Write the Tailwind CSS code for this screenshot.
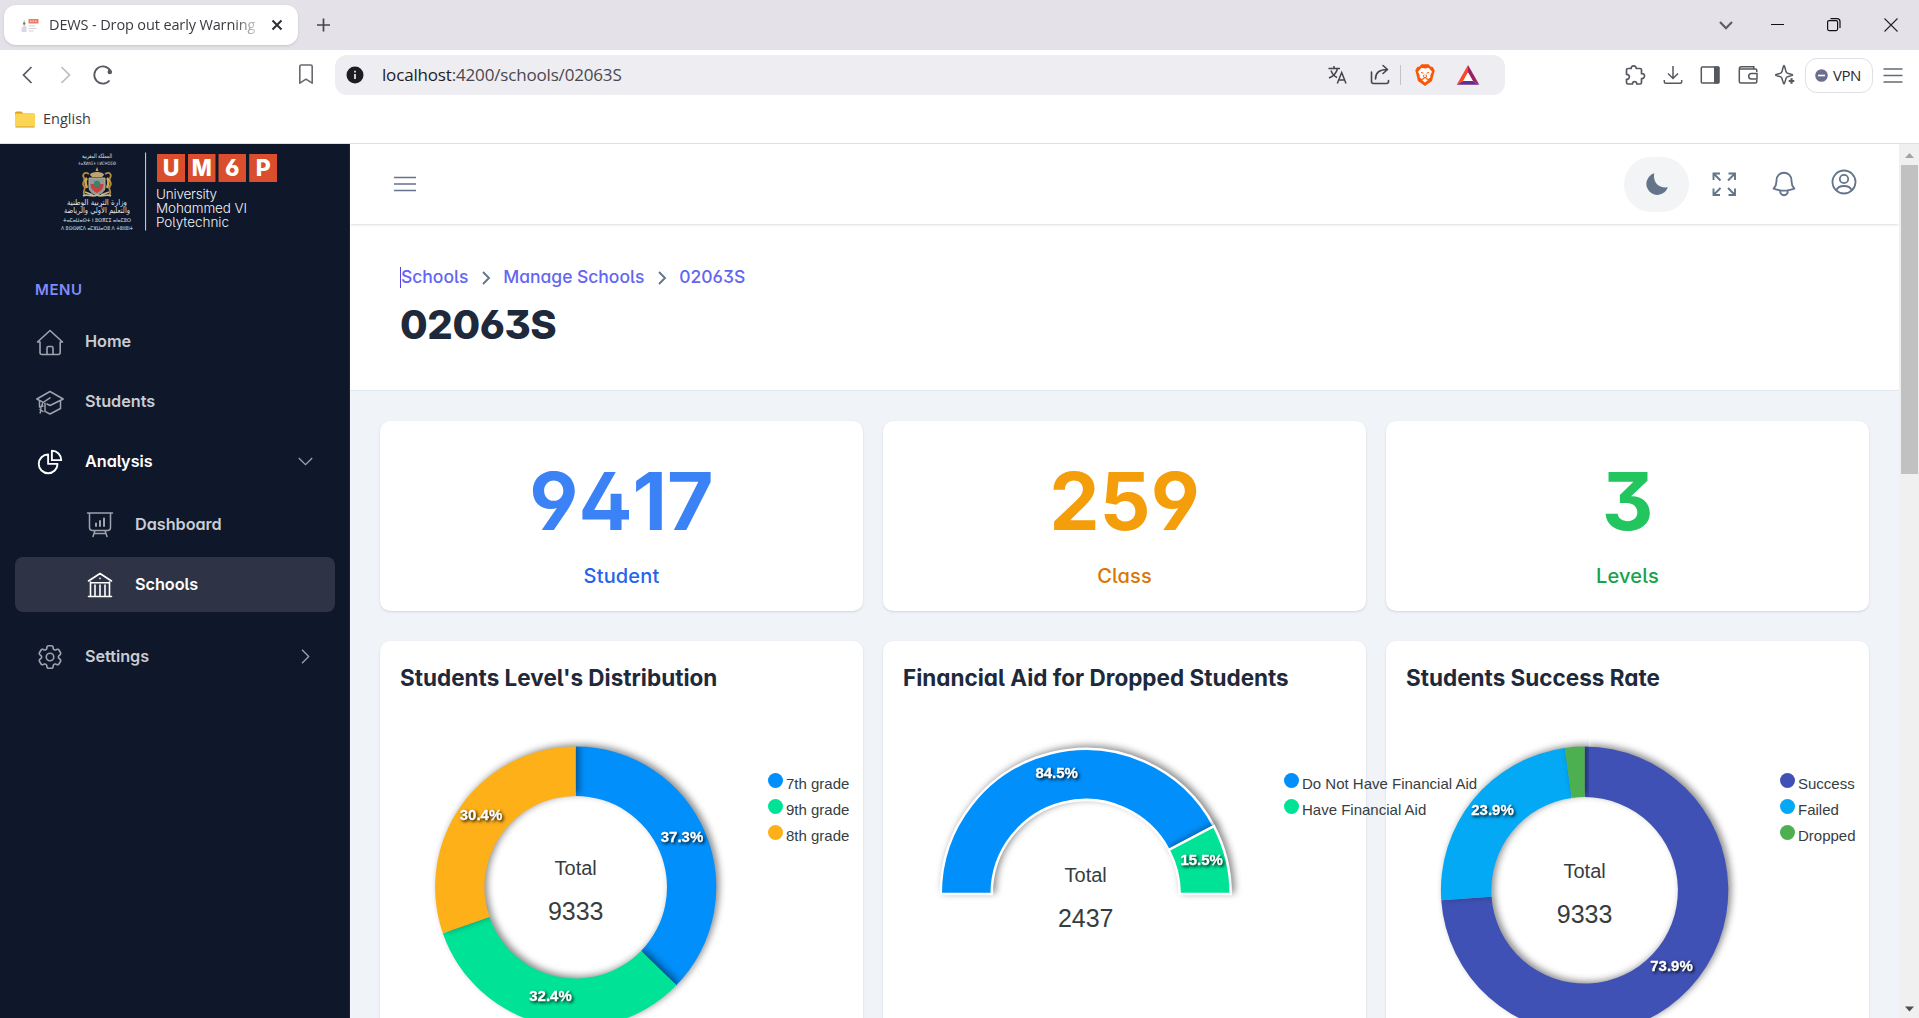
<!DOCTYPE html>
<html lang="en">
<head>
<meta charset="utf-8">
<title>DEWS - Drop out early Warning System</title>
<script src="https://cdn.jsdelivr.net/npm/@tailwindcss/browser@4"></script>
</head>
<body class="w-[1919px] h-[1018px] overflow-hidden flex flex-col bg-white font-['Open_Sans',sans-serif]">

<!-- Tab strip -->
<div class="h-[50px] shrink-0 bg-[#e4e2e8] flex items-center pl-1">
  <div class="w-[294px] h-10 bg-white rounded-xl shadow-sm flex items-center pl-[17px]">
    <svg class="w-[18px] h-4 shrink-0" viewBox="0 0 18 16"><path d="M2.500 3h1.500v5l1.500 2v5h-5v-4l2-2z" fill="#d9d8e8"/><circle cx="3.200" cy="6.500" r="1.200" fill="#8b6d3a"/><rect x="7.500" y="2" width="10" height="4.500" fill="#ee7b63"/><path d="M9 4.200h7" stroke="#fbd3ca" stroke-width="1.200" stroke-dasharray="1.500 1"/><path d="M7.500 9h6.500M7.500 11.500h8M7.500 14h5" stroke="#d4d4d8" stroke-width="1.200"/></svg>
    <div class="ml-2.5 w-[209px] whitespace-nowrap text-[14.5px] text-[#3b3a40] tracking-[-0.13px] [mask-image:linear-gradient(to_right,black_185px,transparent_214px)]">DEWS - Drop out early Warning</div>
    <svg class="w-5 h-5 ml-[9px] shrink-0" viewBox="0 0 20 20" fill="none" stroke="#2f2e35" stroke-width="2"><path d="M5.500 5.500l9 9M14.500 5.500l-9 9"/></svg>
  </div>
  <svg class="w-5 h-5 ml-[15px]" viewBox="0 0 20 20" fill="none" stroke="#46454c" stroke-width="1.700"><path d="M10.500 3.500v13M4 10h13"/></svg>
  <div class="ml-auto flex items-center">
    <svg class="w-5 h-5" viewBox="0 0 20 20" fill="none" stroke="#5b5e63" stroke-width="2.200"><path d="M4 7l6 6.200L16 7"/></svg>
    <svg class="w-5 h-5 ml-[31px]" viewBox="0 0 20 20"><path d="M4 9.500h13" stroke="#111"/></svg>
    <svg class="w-5 h-5 ml-9" viewBox="0 0 20 20" fill="none" stroke="#111" stroke-width="1.200"><rect x="4.600" y="5.600" width="10" height="10" rx="1.500"/><path d="M7.500 3.600h6.500a3 3 0 013 3v6.500"/></svg>
    <svg class="w-5 h-5 ml-[38px] mr-[18px]" viewBox="0 0 20 20" fill="none" stroke="#222" stroke-width="1.100"><path d="M3.500 3.500l13 13M16.500 3.500l-13 13"/></svg>
  </div>
</div>

<!-- Address row -->
<div class="h-[50px] shrink-0 flex items-center pl-[17px]">
  <svg class="w-5 h-5" viewBox="0 0 20 20" fill="none" stroke="#55585f" stroke-width="1.700"><path d="M14.500 2L6.500 10l8 8"/></svg>
  <svg class="w-5 h-5 ml-[18px]" viewBox="0 0 20 20" fill="none" stroke="#bcbdc1" stroke-width="1.700"><path d="M6.500 2l8 8-8 8"/></svg>
  <svg class="w-6 h-6 ml-[16px]" viewBox="0 0 24 24" fill="none" stroke="#55585f" stroke-width="1.800"><path d="M18.500 17.500A8.600 8.600 0 1 1 19.500 8"/><circle cx="18.800" cy="9" r="2.300" fill="#55585f" stroke="none"/></svg>
  <svg class="w-6 h-6 ml-[179px]" viewBox="0 0 24 24" fill="none" stroke="#66696f" stroke-width="1.600"><path d="M5.800 3.500a1.500 1.500 0 011.500-1.500h9.400a1.500 1.500 0 011.500 1.500V20.200L12 16.200l-6.200 4z" stroke-linejoin="round"/></svg>
  <div class="ml-[17px] w-[1170px] h-10 rounded-xl bg-[#eeedf2] flex items-center pl-[11px]">
    <svg class="w-[18px] h-[18px]" viewBox="0 0 18 18"><circle cx="9" cy="9" r="8.500" fill="#1d1c22"/><path d="M9 8v5M9 4.700v1.800" stroke="#eeedf2" stroke-width="1.700"/></svg>
    <div class="ml-[18px] text-[17px] text-[#49484f] tracking-[-0.17px] whitespace-nowrap"><span class="text-[#1d1c22]">localhost</span>:4200/schools/02063S</div>
    <div class="ml-auto flex items-center">
      <svg class="w-6 h-6" viewBox="0 0 24 24" fill="none" stroke="#46454c" stroke-width="1.500"><path d="M3.500 5.500h11.500M9 3v2.500M12.500 5.500c-1 4-4.500 8-8.500 9.500M6 7.500c1 3 3 5.500 6 7M12.300 20.500L16.700 9.500 21 20.500M13.800 17h5.800"/></svg>
      <svg class="w-6 h-6 ml-[19px]" viewBox="0 0 24 24" fill="none" stroke="#46454c" stroke-width="1.600" stroke-linecap="round" stroke-linejoin="round"><path d="M3.500 9v9.500a2 2 0 002 2h13a2 2 0 002-2V17.500M7.500 16c0-5.500 3.500-9.500 11.500-9.500M15 2.500l4.500 4-4.500 4"/></svg>
      <div class="w-px h-5 ml-2 bg-[#c4c3c9]"></div>
      <svg class="w-6 h-6 ml-3" viewBox="0 0 24 24"><path d="M6.500 3.500L8.500 1.200h7l2 2.300 2.300.6L21.700 7.500 21 10l-2 8-7 5-7-5-2-8-.700-2.500 1.900-3.400z" fill="#fb5607"/><path d="M12 5.500l3.500-.700L19 8.700l-1.800 3.800.3 1.700-2 1.800-1.700-1-1.800.7-1.800-.7-1.700 1-2-1.800.300-1.700L5 8.700l3.500-3.900z" fill="#fff"/><path d="M9 17l3-1.200 3 1.200-3 2.500z" fill="#fff"/><path d="M8 9.500l2.500.7M16 9.500l-2.500.7M11 11.500l-.5 2.500 1.500.8 1.500-.8-.5-2.500" fill="none" stroke="#fb5607" stroke-width="1"/></svg>
      <svg class="w-6 h-6 ml-[19px] mr-[25px]" viewBox="0 0 24 24"><path d="M12 2L.7 21.700l6.500-3.800L12 9.500z" fill="#ff4724"/><path d="M12 2l11.300 19.700-6.500-3.800L12 9.500z" fill="#9e1f63"/><path d="M.7 21.700h22.600l-6.500-3.800H7.200z" fill="#662d91"/><path d="M12 9.500l4.800 8.400H7.200z" fill="#fff"/></svg>
    </div>
  </div>
  <div class="ml-auto flex items-center">
    <svg class="w-6 h-6" viewBox="0 0 24 24" fill="none" stroke="#55585f" stroke-width="1.700" stroke-linejoin="round"><path d="M5 5.500h3.200c-.7-3.500 5.600-3.500 5 0h3.800a1.500 1.500 0 011.500 1.500v3.700c4-.8 4 5.400 0 4.800v4a1.500 1.500 0 01-1.500 1.500h-3.300c.4-3.300-4.600-3.300-4.200 0H5A1.500 1.500 0 013.500 19.500v-3.200c3.800.4 3.800-5.300 0-4.900V7A1.500 1.500 0 015 5.500z"/></svg>
    <svg class="w-6 h-6 ml-[13.500px]" viewBox="0 0 24 24" fill="none" stroke="#55585f" stroke-width="1.500"><path d="M12 3v12M7 10.500l5 5 5-5M3.300 17v1.800a1.500 1.500 0 001.500 1.500h14.400a1.500 1.500 0 001.500-1.500V17"/></svg>
    <svg class="w-6 h-6 ml-[13.500px]" viewBox="0 0 24 24"><rect x="3.300" y="4" width="17.500" height="16" rx="1" fill="none" stroke="#55585f" stroke-width="1.500"/><path d="M16 3.500h4.500a1 1 0 011 1v15a1 1 0 01-1 1H16z" fill="#55585f"/></svg>
    <svg class="w-6 h-6 ml-[13.500px]" viewBox="0 0 24 24" fill="none" stroke="#55585f" stroke-width="1.500"><path d="M20.800 9V7.500a1.500 1.500 0 00-1.500-1.500H3.300M3.300 6v12.500a1.500 1.500 0 001.500 1.500h14.500a1.500 1.500 0 001.500-1.500V17M3.300 6a2 2 0 011.500-2.200h13v2.200M21 10.500h-5.500a2.800 2.800 0 000 5.600H21z"/></svg>
    <svg class="w-6 h-6 ml-[13.500px]" viewBox="0 0 24 24" fill="none" stroke="#55585f" stroke-width="1.500" stroke-linejoin="round"><path d="M11 2.500c1 0 1.300 6 2.700 7.300s6 1.200 6 2.200-4.600 1-6 2.300-1.700 6.700-2.700 6.700-1.300-5.300-2.700-6.700S2.500 13 2.500 12s4.400-.9 5.800-2.200S10 2.500 11 2.500z"/><path d="M18.500 15.200v5.600M15.700 18h5.600" stroke-width="2.200"/></svg>
    <div class="ml-[8px] w-[68px] h-[35px] rounded-xl border border-[#dfdee4] flex items-center pl-[9px] text-[#2b2a30]">
      <svg class="w-[13px] h-[13px]" viewBox="0 0 13 13"><circle cx="6.500" cy="6.500" r="6.300" fill="#6b6f8d"/><path d="M3 6.500h7" stroke="#fff" stroke-width="1.600"/></svg>
      <span class="ml-[5px] text-[15px] tracking-[-0.5px]">VPN</span>
    </div>
    <svg class="w-5 h-5 ml-2.5 mr-[16px]" viewBox="0 0 20 20" stroke="#66696f" stroke-width="1.500"><path d="M.5 4h19M.5 10.500h19M.5 17h19"/></svg>
  </div>
</div>

<!-- Bookmarks -->
<div class="h-11 shrink-0 flex items-center pl-[15px] pb-[5px] border-b border-[#e0e0e4] text-[14.500px] text-[#3b3a40]">
  <svg class="w-5 h-[17px]" viewBox="0 0 20 17"><path d="M0 2a1.500 1.500 0 011.500-1.500h5L8.500 2.500h10A1.500 1.500 0 0120 4v3H0z" fill="#e0a315"/><rect y="2.500" width="20" height="13.500" rx="1.500" fill="#fcd653"/><path d="M.5 16h19" stroke="#cf9c2c"/></svg>
  <span class="ml-2">English</span>
</div>

<!-- Page -->
<div class="flex-1 min-h-0 flex font-['Inter',sans-serif] [font-feature-settings:'cv02','cv03','cv04','cv05','cv09','cv11']">

  <aside class="w-[350px] shrink-0 bg-[#0f172a] border-r border-[#1d2536]">
    <svg class="block w-[349px] h-[106px]" viewBox="0 144 349 106">
      <g fill="#dfe3ea" font-family="'DejaVu Sans', sans-serif" text-anchor="middle">
        <text x="97" y="158" font-size="6" textLength="30" lengthAdjust="spacingAndGlyphs" direction="rtl">المملكة المغربية</text>
        <text x="97" y="165" font-size="4.500" textLength="38" lengthAdjust="spacingAndGlyphs">ⵜⴰⴳⵍⴷⵉⵜ ⵏ ⵍⵎⵖⵔⵉⴱ</text>
        <text x="97" y="205" font-size="8" textLength="60" lengthAdjust="spacingAndGlyphs">وزارة التربية الوطنية</text>
        <text x="97" y="213" font-size="8" textLength="66" lengthAdjust="spacingAndGlyphs">والتعليم الأولي والرياضة</text>
        <text x="97" y="222" font-size="5" textLength="68" lengthAdjust="spacingAndGlyphs">ⵜⴰⵎⴰⵡⴰⵙⵜ ⵏ ⵓⵙⴳⵎⵉ ⴰⵏⴰⵎⵓⵔ</text>
        <text x="97" y="230" font-size="5" textLength="72" lengthAdjust="spacingAndGlyphs">ⴷ ⵓⵙⵙⵍⵎⴷ ⴰⵎⵣⵡⴰⵔⵓ ⴷ ⵜⵓⵏⵏⵓⵏⵜ</text>
      </g>
      <g fill="none" stroke="#b08a3e" stroke-width="1.800">
        <path d="M89 174c-5-3-7 1-5 4s-3 5 0 8-3 6 1 9M105 174c5-3 7 1 5 4s3 5 0 8 3 6-1 9"/>
        <path d="M87 178c-3 3-1 7 0 10M107 178c3 3 1 7 0 10" stroke="#d1a94f" stroke-width="2.500"/>
      </g>
      <path d="M90 175c0-4 14-4 14 0l-2 2H92zM97 167l1.500 4h-3z" fill="#bda474"/>
      <path d="M89 178h16v9c0 5-5 7-8 8-3-1-8-3-8-8z" fill="#8a9aa0" stroke="#c5ad80"/>
      <path d="M90.500 184h13c0 5-3 7-6.500 9-3.500-2-6.500-4-6.500-9z" fill="#c8423c"/>
      <circle cx="97" cy="184" r="3.200" fill="#3f8268"/>
      <path d="M83 196c4-3 9 2 14-1 5 3 10-2 14 1M85 192l8 3M109 192l-8 3" fill="none" stroke="#c9b78f" stroke-width="1.600"/>
      <path d="M145.600 152.500v78" stroke="#d5d9e0"/>
      <g fill="#d94f2d"><rect x="157" y="154" width="28" height="28"/><rect x="188" y="154" width="27.500" height="28"/><rect x="218.500" y="154" width="27.500" height="28"/><rect x="249.200" y="154" width="27.800" height="28"/></g>
      <g fill="#fff" font-family="Inter, sans-serif" font-weight="800" font-size="23" text-anchor="middle"><text x="171" y="176.200">U</text><text x="201.800" y="176.200" textLength="20" lengthAdjust="spacingAndGlyphs">M</text><text x="232.300" y="176.200">6</text><text x="263.300" y="176.200">P</text></g>
      <g fill="#f1f3f6" font-family="Inter, sans-serif" font-weight="300" font-size="13.500"><text x="156" y="199" textLength="61">University</text><text x="156" y="213" textLength="91">Mohammed VI</text><text x="156" y="227" textLength="73">Polytechnic</text></g>
    </svg>
    <div class="mt-[30px] h-5 flex items-center pl-[35px] text-[15px] font-semibold tracking-[0.6px] text-[#818cf8]">MENU</div>
    <nav class="mt-[14px] pl-[15px] pr-[14px] flex flex-col gap-[5px] text-[16.25px] tracking-[-0.05px] font-semibold text-[#c9ccd3]">
      <a class="h-[55px] flex items-center px-5 gap-5">
        <svg class="w-[30px] h-[30px] text-[#9fa3ad]" viewBox="0 0 30 30" fill="none" stroke="currentColor" stroke-width="1.600" stroke-linejoin="round" stroke-linecap="round"><path d="M2.500 15L15 3.500 27.500 15h-2.300v10.500a2 2 0 01-2 2H7a2 2 0 01-2-2V15zM12 27.500v-6.500a1.500 1.500 0 011.500-1.500h3a1.500 1.500 0 011.500 1.500v6.500"/></svg>Home</a>
      <a class="h-[55px] flex items-center px-5 gap-5">
        <svg class="w-[30px] h-[30px] text-[#9fa3ad]" viewBox="0 0 30 30" fill="none" stroke="currentColor" stroke-width="1.500" stroke-linejoin="round" stroke-linecap="round"><path d="M1.800 12L15 4.500 28.200 12 15 18.500l-3-1.500M1.800 12l5.500 2.800M15 10.800l-7 4.700c-2 4-2.500 7-2.800 10.500M4.500 13.500v6.500l3.500-1M5 22.500l3 2M25.500 13.500v8L15 27l-5-2.600v-8.200"/></svg>Students</a>
      <a class="h-[55px] flex items-center px-5 gap-5 text-white">
        <svg class="w-[30px] h-[30px]" viewBox="0 0 24 24" fill="none" stroke="currentColor" stroke-width="1.500" stroke-linejoin="round" stroke-linecap="round"><path d="M10.500 6a7.500 7.500 0 107.500 7.500h-7.500V6z"/><path d="M13.500 10.500H21A7.500 7.500 0 0013.500 3v7.500z"/></svg>Analysis
        <svg class="w-[15px] h-[15px] ml-auto mr-[2px] text-[#9fa3ad]" viewBox="0 0 15 15" fill="none" stroke="currentColor" stroke-width="1.300"><path d="M.8 4l6.700 6.700L14.200 4"/></svg></a>
      <a class="mt-[3px] h-[55px] flex items-center pl-[70px] gap-5">
        <svg class="w-[30px] h-[30px] text-[#9fa3ad]" viewBox="0 0 30 30" fill="none" stroke="currentColor" stroke-width="1.500" stroke-linecap="round"><path d="M2.500 3h25M4.500 3v14.500a3 3 0 003 3h15a3 3 0 003-3V3M10 20.500L8 26.500M20 20.500l2 6M9.200 23.500h11.600"/><path d="M11 16v-2.500M15 16v-5M19 16V8.500" stroke-width="2"/></svg>Dashboard</a>
      <a class="h-[55px] flex items-center pl-[70px] gap-5 text-white bg-[#2e3445] rounded-lg">
        <svg class="w-[30px] h-[30px]" viewBox="0 0 30 30" fill="none" stroke="currentColor" stroke-width="1.600" stroke-linecap="round" stroke-linejoin="round"><path d="M3.500 26.500h23M3.500 11L15 3.500 26.500 11M15 8.200v.4M5.500 26V12M24.500 26V12M10 26V15M15 26V15M20 26V15M5.500 12.800h19"/></svg>Schools</a>
      <a class="mt-3 h-[55px] flex items-center px-5 gap-5">
        <svg class="w-[30px] h-[30px] text-[#9fa3ad]" viewBox="0 0 24 24" fill="none" stroke="currentColor" stroke-width="1.300" stroke-linejoin="round" stroke-linecap="round"><path d="M9.594 3.940c.09-.542.560-.940 1.110-.940h2.593c.550 0 1.020.398 1.110.940l.213 1.281c.063.374.313.686.645.870.074.040.147.083.220.127.324.196.720.257 1.075.124l1.217-.456a1.125 1.125 0 011.370.490l1.296 2.247a1.125 1.125 0 01-.260 1.431l-1.003.827c-.293.240-.438.613-.431.992a6.759 6.759 0 010 .255c-.007.378.138.750.430.990l1.005.828c.424.350.534.954.260 1.430l-1.298 2.247a1.125 1.125 0 01-1.369.491l-1.217-.456c-.355-.133-.750-.072-1.076.124a6.570 6.570 0 01-.220.128c-.331.183-.581.495-.644.869l-.213 1.280c-.090.543-.560.941-1.110.941h-2.594c-.550 0-1.020-.398-1.110-.940l-.213-1.281c-.062-.374-.312-.686-.644-.870a6.520 6.520 0 01-.220-.127c-.325-.196-.720-.257-1.076-.124l-1.217.456a1.125 1.125 0 01-1.369-.490l-1.297-2.247a1.125 1.125 0 01.260-1.431l1.004-.827c.292-.240.437-.613.430-.992a6.932 6.932 0 010-.255c.007-.378-.138-.750-.430-.990l-1.004-.828a1.125 1.125 0 01-.260-1.430l1.297-2.247a1.125 1.125 0 011.370-.491l1.216.456c.356.133.751.072 1.076-.124.072-.044.146-.087.220-.128.332-.183.582-.495.644-.869l.214-1.281z"/><path d="M15 12a3 3 0 11-6 0 3 3 0 016 0z"/></svg>Settings
        <svg class="w-[15px] h-[15px] ml-auto mr-[2px] text-[#9fa3ad]" viewBox="0 0 15 15" fill="none" stroke="currentColor" stroke-width="1.300"><path d="M4 .8l6.700 6.700L4 14.200"/></svg></a>
    </nav>
  </aside>

  <main class="flex-1 min-w-0 flex flex-col bg-[#f0f3f8] overflow-hidden">
    <header class="relative z-10 h-20 shrink-0 bg-white shadow flex items-center pl-11 pr-[40px] text-[#64748b]">
      <svg class="w-[22px] h-[18px]" viewBox="0 0 22 18" stroke="currentColor" stroke-width="1.700"><path d="M0 2.500h22M0 9h22M0 15.500h22"/></svg>
      <div class="ml-auto flex items-center">
        <div class="w-[65px] h-[55px] rounded-full bg-[#f3f4f6] flex items-center justify-center">
          <svg class="w-[22px] h-[22px]" viewBox="0 0 22 22" fill="currentColor"><path d="M8.300.3C6.700 8 11.500 15.500 21.800 14.300A11 11 0 118.300.3z"/></svg>
        </div>
        <svg class="w-[30px] h-[30px] ml-5" viewBox="0 0 30 30" fill="none" stroke="currentColor" stroke-width="1.900"><path d="M4.500 11V4.500H11M4.500 4.500l7 7M26 11V4.500h-6.500M26 4.500l-7 7M4.500 19.500V26H11M4.500 26l7-7M26 19.500V26h-6.500M26 26l-7-7"/></svg>
        <svg class="w-[30px] h-[30px] ml-[30px]" viewBox="0 0 24 24" fill="none" stroke="currentColor" stroke-width="1.500" stroke-linecap="round" stroke-linejoin="round"><path d="M14.857 17.082a23.848 23.848 0 005.454-1.310A8.967 8.967 0 0118 9.750v-.700V9A6 6 0 006 9v.750a8.967 8.967 0 01-2.312 6.022c1.733.640 3.560 1.085 5.455 1.310m5.714 0a24.255 24.255 0 01-5.714 0m5.714 0a3 3 0 11-5.714 0"/></svg>
        <svg class="w-[30px] h-[30px] ml-[30px] mb-1" viewBox="0 0 30 30" fill="none" stroke="currentColor" stroke-width="1.800"><circle cx="15" cy="15" r="11.500"/><circle cx="15" cy="12" r="4.200"/><path d="M7.200 23.500c1-3 4-4.500 7.800-4.500s6.800 1.500 7.800 4.500"/></svg>
      </div>
    </header>

    <div class="h-[167px] shrink-0 bg-white border-b border-[#e2e8f0] pl-[50px] pt-[41px]">
      <div class="flex items-center h-[25px] text-[17.500px] font-[450] tracking-[-0.03px] text-[#6366f1]">
        <span class="border-l border-[#4f46e5] h-[21px] flex items-center">Schools</span>
        <svg class="w-3.5 h-3.5 mx-[10.500px] text-[#64748b]" viewBox="0 0 14 14" fill="none" stroke="currentColor" stroke-width="1.900"><path d="M4 1l6 6-6 6"/></svg>
        <span>Manage Schools</span>
        <svg class="w-3.5 h-3.5 mx-[10.500px] text-[#64748b]" viewBox="0 0 14 14" fill="none" stroke="currentColor" stroke-width="1.900"><path d="M4 1l6 6-6 6"/></svg>
        <span>02063S</span>
      </div>
      <h1 class="mt-[10px] leading-[50px] text-[40px] font-extrabold tracking-[-0.4px] text-[#1e293b]">02063S</h1>
    </div>

    <div class="pt-[30px] pl-[30px] grid grid-cols-[483px_483px_483px] gap-x-5 gap-y-[30px]">
      <div class="h-[190px] bg-white rounded-[10px] shadow flex flex-col items-center">
        <div class="mt-10 leading-[80px] text-[80px] font-bold [font-kerning:none] text-[#3b82f6]">9417</div>
        <div class="mt-5 leading-[30px] text-[20px] font-[450] tracking-[0.15px] text-[#2563eb]">Student</div>
      </div>
      <div class="h-[190px] bg-white rounded-[10px] shadow flex flex-col items-center">
        <div class="mt-10 leading-[80px] text-[80px] font-bold [font-kerning:none] text-[#f59e0b]">259</div>
        <div class="mt-5 leading-[30px] text-[20px] font-[450] tracking-[0.15px] text-[#d97706]">Class</div>
      </div>
      <div class="h-[190px] bg-white rounded-[10px] shadow flex flex-col items-center">
        <div class="mt-10 leading-[80px] text-[80px] font-bold [font-kerning:none] text-[#22c55e]">3</div>
        <div class="mt-5 leading-[30px] text-[20px] font-[450] tracking-[0.15px] text-[#16a34a]">Levels</div>
      </div>

      <section class="h-[480px] bg-white rounded-[10px] shadow">
        <h2 class="pt-[22px] pl-5 leading-[30px] text-[22.500px] font-bold text-[#1e293b]">Students Level's Distribution</h2>
        <div class="flex">
          <svg class="w-[388px] h-[420px] shrink-0 overflow-visible" viewBox="0 0 388 420" data-chart="levels"></svg>
          <ul class="mt-[78px] font-['Liberation_Sans',sans-serif] [font-feature-settings:normal] text-[15px] text-[#373d3f] whitespace-nowrap">
            <li class="h-[26px] flex items-center gap-[3px]"><i class="w-[15px] h-[15px] rounded-full bg-[#008ffb] mb-[7px]"></i>7th grade</li>
            <li class="h-[26px] flex items-center gap-[3px]"><i class="w-[15px] h-[15px] rounded-full bg-[#00e396] mb-[7px]"></i>9th grade</li>
            <li class="h-[26px] flex items-center gap-[3px]"><i class="w-[15px] h-[15px] rounded-full bg-[#feb019] mb-[7px]"></i>8th grade</li>
          </ul>
        </div>
      </section>

      <section class="h-[480px] bg-white rounded-[10px] shadow">
        <h2 class="pt-[22px] pl-5 leading-[30px] text-[22.500px] font-bold text-[#1e293b]">Financial Aid for Dropped Students</h2>
        <div class="flex">
          <svg class="w-[401px] h-[420px] shrink-0 overflow-visible" viewBox="0 0 401 420" data-chart="aid"></svg>
          <ul class="relative z-10 mt-[78px] font-['Liberation_Sans',sans-serif] [font-feature-settings:normal] text-[15px] text-[#373d3f] whitespace-nowrap">
            <li class="h-[26px] flex items-center gap-[3px]"><i class="w-[15px] h-[15px] rounded-full bg-[#008ffb] mb-[7px]"></i>Do Not Have Financial Aid</li>
            <li class="h-[26px] flex items-center gap-[3px]"><i class="w-[15px] h-[15px] rounded-full bg-[#00e396] mb-[7px]"></i>Have Financial Aid</li>
          </ul>
        </div>
      </section>

      <section class="h-[480px] bg-white rounded-[10px] shadow">
        <h2 class="pt-[22px] pl-5 leading-[30px] text-[22.500px] font-bold text-[#1e293b]">Students Success Rate</h2>
        <div class="flex">
          <svg class="w-[394px] h-[420px] shrink-0 overflow-visible" viewBox="0 0 394 420" data-chart="success"></svg>
          <ul class="mt-[78px] font-['Liberation_Sans',sans-serif] [font-feature-settings:normal] text-[15px] text-[#373d3f] whitespace-nowrap">
            <li class="h-[26px] flex items-center gap-[3px]"><i class="w-[15px] h-[15px] rounded-full bg-[#3f51b5] mb-[7px]"></i>Success</li>
            <li class="h-[26px] flex items-center gap-[3px]"><i class="w-[15px] h-[15px] rounded-full bg-[#03a9f4] mb-[7px]"></i>Failed</li>
            <li class="h-[26px] flex items-center gap-[3px]"><i class="w-[15px] h-[15px] rounded-full bg-[#4caf50] mb-[7px]"></i>Dropped</li>
          </ul>
        </div>
      </section>
    </div>
  </main>

  <div class="w-5 shrink-0 bg-[#f0f0f0] flex flex-col items-center">
    <svg class="w-5 h-[21px]" viewBox="0 0 20 21"><path d="M6 14l4.500-5 4.500 5z" fill="#a3a3a3"/></svg>
    <div class="w-[17px] h-[309px] bg-[#c1c1c1]"></div>
    <svg class="w-5 h-[21px] mt-auto" viewBox="0 0 20 21"><path d="M6 9.500l4.500 5 4.500-5z" fill="#505050"/></svg>
  </div>
</div>

<svg width="0" height="0" class="absolute">
  <defs>
    <filter id="sliceShadow" x="-20%" y="-20%" width="140%" height="140%" color-interpolation-filters="sRGB"><feDropShadow dx="3" dy="-2" stdDeviation="3.500" flood-color="#000" flood-opacity="0.450"/></filter>
    <filter id="labelShadow" x="-50%" y="-80%" width="200%" height="260%" color-interpolation-filters="sRGB"><feDropShadow dx="1.500" dy="1.500" stdDeviation="1.800" flood-color="#000" flood-opacity="0.900"/></filter>
  </defs>
</svg>

<script>
// Angles are in degrees, clockwise from twelve o'clock; label = [text, x, y].
const charts = {
  levels: { cx: 195.700, cy: 194.200, R: 140.600, r: 91.300, start: 0, span: 360, stroke: 0,
    slices: [[37.3, '#008ffb'], [32.4, '#00e396'], [30.3, '#feb019']],
    labels: [['37.3%', 302, 149], ['32.4%', 170.500, 308], ['30.4%', 101, 126.700]], total: '9333', ty: 182 },
  aid: { cx: 202.700, cy: 201, R: 145, r: 94, start: -90, span: 180, stroke: 2.5,
    slices: [[84.5, '#008ffb'], [15.5, '#00e396']],
    labels: [['84.5%', 173.700, 85], ['15.5%', 318.700, 172]], total: '2437', ty: 188.700 },
  success: { cx: 198.600, cy: 197.300, R: 143.700, r: 93.300, start: 0, span: 360, stroke: 0,
    slices: [[73.9, '#3f51b5'], [23.9, '#03a9f4'], [2.2, '#4caf50']],
    labels: [['73.9%', 285.500, 278], ['23.9%', 106.500, 122]], total: '9333', ty: 185 }
};
for (const [name, c] of Object.entries(charts)) {
  const pt = (rad, deg) => {
    const t = (deg - 90) * Math.PI / 180;
    return (c.cx + rad * Math.cos(t)).toFixed(2) + ' ' + (c.cy + rad * Math.sin(t)).toFixed(2);
  };
  let a = c.start, out = '';
  for (const [pct, color] of c.slices) {
    const b = a + c.span * pct / 100, big = b - a > 180 ? 1 : 0;
    out += `<path filter="url(#sliceShadow)" fill="${color}" stroke="#fff" stroke-width="${c.stroke}" d="M${pt(c.R, a)}A${c.R} ${c.R} 0 ${big} 1 ${pt(c.R, b)}L${pt(c.r, b)}A${c.r} ${c.r} 0 ${big} 0 ${pt(c.r, a)}Z"/>`;
    a = b;
  }
  for (const [t, x, y] of c.labels)
    out += `<text filter="url(#labelShadow)" x="${x}" y="${y}" font-size="15" font-weight="700" fill="#fff" stroke="#fff" stroke-width="0.3" text-anchor="middle">${t}</text>`;
  out += `<text x="${c.cx}" y="${c.ty}" font-size="20" fill="#373d3f" text-anchor="middle">Total</text>`;
  out += `<text x="${c.cx}" y="${c.ty + 45}" font-size="25" fill="#373d3f" text-anchor="middle">${c.total}</text>`;
  const svg = document.querySelector(`[data-chart="${name}"]`);
  svg.setAttribute('font-family', "'Liberation Sans', Arial, sans-serif");
  svg.innerHTML = out;
}
</script>
</body>
</html>
